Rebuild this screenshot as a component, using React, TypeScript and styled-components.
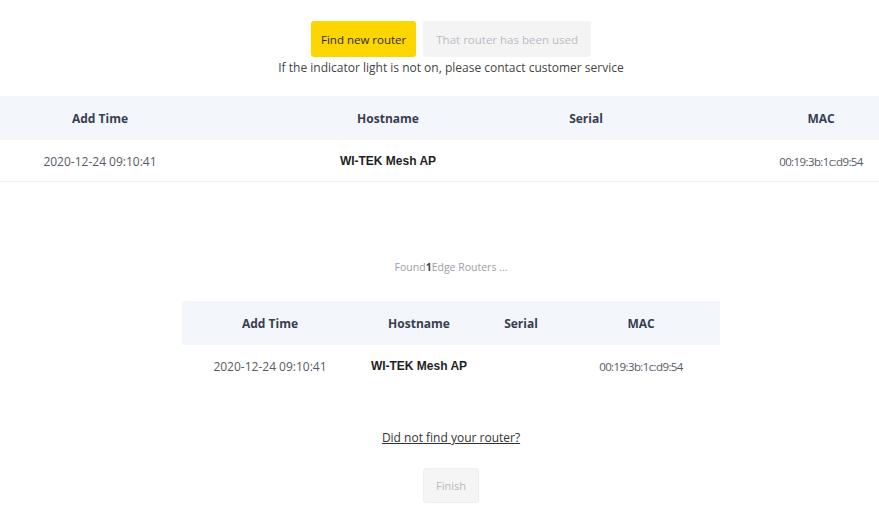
import React from 'react';
import styled, { createGlobalStyle } from 'styled-components';

const GlobalStyle = createGlobalStyle`
  html, body {
    margin: 0;
    padding: 0;
    background: #fff;
    font-family: "Open Sans", "Noto Sans", sans-serif;
  }
`;

const Page = styled.div`
  width: 879px;
  min-height: 522px;
  display: flex;
  flex-direction: column;
  align-items: center;
  padding-top: 21px;
  box-sizing: border-box;
`;

const Centered = styled.div`
  display: flex;
  flex-direction: column;
  align-items: center;
  padding-left: 23px;
  box-sizing: border-box;
  width: 100%;
`;

const ButtonRow = styled.div`
  display: flex;
  gap: 7px;
`;

const ModeButton = styled.button<{ $active?: boolean }>`
  height: 36px;
  padding: 0 ${p => (p.$active ? '10px' : '13px')};
  border: none;
  border-radius: 3px;
  font-family: inherit;
  font-size: 11.5px;
  background: ${p => (p.$active ? '#fdd600' : '#f4f4f5')};
  color: ${p => (p.$active ? '#2b2b2b' : '#b9bcc4')};
  cursor: pointer;
`;

const Hint = styled.div`
  margin-top: 3px;
  font-size: 12px;
  line-height: 16px;
  color: #444;
`;

const Table = styled.div<{ $cols: string; $width?: string }>`
  width: ${p => p.$width || '100%'};
  display: grid;
  grid-template-columns: ${p => p.$cols};
`;

const HeadCell = styled.div<{ $col: number }>`
  grid-column: ${p => p.$col};
  grid-row: 1;
  height: 44px;
  display: flex;
  align-items: center;
  justify-content: center;
  font-size: 12px;
  font-weight: 700;
  color: #383e52;
`;

const HeadBand = styled.div`
  grid-column: 1 / -1;
  grid-row: 1;
  background: #f3f6fb;
`;

const RowBand = styled.div<{ $border?: boolean }>`
  grid-column: 1 / -1;
  grid-row: 2;
  border-bottom: ${p => (p.$border ? '1px solid #edf1f8' : 'none')};
`;

const DataCell = styled.div<{ $col: number; $kind?: 'host' | 'mac' }>`
  grid-column: ${p => p.$col};
  grid-row: 2;
  height: 42px;
  display: flex;
  align-items: center;
  justify-content: center;
  white-space: nowrap;
  font-size: ${p => (p.$kind === 'mac' ? '11.5px' : '12px')};
  letter-spacing: ${p => (p.$kind === 'mac' ? '-0.6px' : 'normal')};
  font-family: ${p => (p.$kind === 'host' ? '"Liberation Sans", Arial, sans-serif' : 'inherit')};
  font-weight: ${p => (p.$kind === 'host' ? 700 : 400)};
  color: ${p => (p.$kind === 'host' ? '#1f1f1f' : '#555a63')};
`;

const TopTable = styled(Table)`
  margin-top: 20px;
`;

const FoundText = styled.div`
  margin-top: 78px;
  font-size: 10.5px;
  line-height: 14px;
  color: #9a9ea6;

  b {
    color: #444;
    font-weight: 700;
  }
`;

const BottomTable = styled(Table)`
  margin-top: 27px;
`;

const NotFound = styled.a`
  margin-top: 43px;
  font-size: 12px;
  line-height: 16px;
  color: #333;
  text-decoration: underline;
  cursor: pointer;
`;

const FinishButton = styled.button`
  margin-top: 22px;
  width: 56px;
  height: 35px;
  border: 1px solid #eeeeee;
  border-radius: 3px;
  background: #f5f5f5;
  color: #b5b8bf;
  font-family: inherit;
  font-size: 11px;
`;

type Router = { addTime: string; hostname: string; serial: string; mac: string };

const routers: Router[] = [
  { addTime: '2020-12-24 09:10:41', hostname: 'WI-TEK Mesh AP', serial: '', mac: '00:19:3b:1c:d9:54' },
];

const RouterTable: React.FC<{
  cols: string;
  places: number[];
  width?: string;
  border?: boolean;
  as?: typeof TopTable;
}> = ({ cols, places, width, border, as: Wrapper = Table }) => (
  <Wrapper $cols={cols} $width={width}>
    <HeadBand />
    <HeadCell $col={places[0]}>Add Time</HeadCell>
    <HeadCell $col={places[1]}>Hostname</HeadCell>
    <HeadCell $col={places[2]}>Serial</HeadCell>
    <HeadCell $col={places[3]}>MAC</HeadCell>
    {routers.map(r => (
      <React.Fragment key={r.mac}>
        <RowBand $border={border} />
        <DataCell $col={places[0]}>{r.addTime}</DataCell>
        <DataCell $col={places[1]} $kind="host">{r.hostname}</DataCell>
        <DataCell $col={places[2]}>{r.serial}</DataCell>
        <DataCell $col={places[3]} $kind="mac">{r.mac}</DataCell>
      </React.Fragment>
    ))}
  </Wrapper>
);

export default function App() {
  return (
    <>
      <GlobalStyle />
      <Page>
        <Centered>
          <ButtonRow>
            <ModeButton $active>Find new router</ModeButton>
            <ModeButton>That router has been used</ModeButton>
          </ButtonRow>
          <Hint>If the indicator light is not on, please contact customer service</Hint>
        </Centered>

        <RouterTable
          as={TopTable}
          cols="200px 90px 196px 200px 77px 116px"
          places={[1, 3, 4, 6]}
          border
        />

        <Centered>
          <FoundText>
            Found<b>1</b>Edge Routers ...
          </FoundText>
          <RouterTable
            as={BottomTable}
            cols="176px 122px 82px 158px"
            places={[1, 2, 3, 4]}
            width="538px"
          />
          <NotFound>Did not find your router?</NotFound>
          <FinishButton>Finish</FinishButton>
        </Centered>
      </Page>
    </>
  );
}
